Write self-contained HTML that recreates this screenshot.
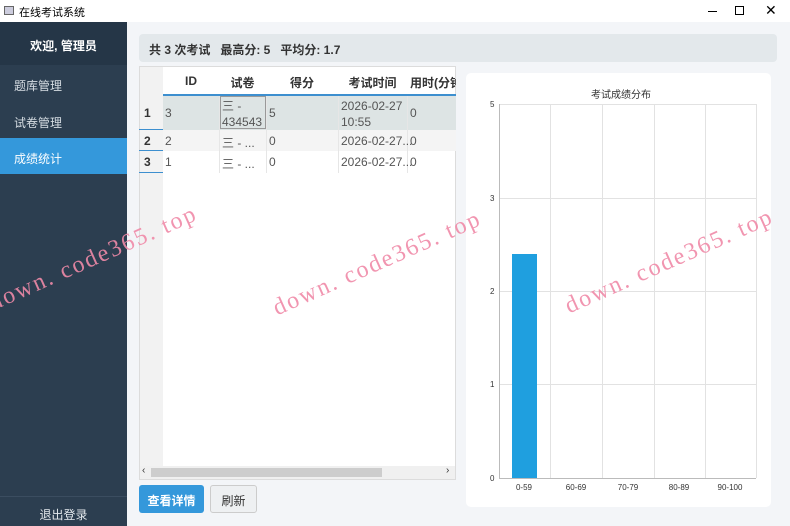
<!DOCTYPE html>
<html><head><meta charset="utf-8"><style>
*{margin:0;padding:0;box-sizing:border-box}
body{width:790px;height:526px;overflow:hidden;position:relative;background:#f3f5f8;font-family:"Liberation Sans","Noto Sans CJK SC",sans-serif;color:#333}
.a{position:absolute}
.t{font-size:12px;white-space:nowrap}
.wm{position:absolute;color:#f08aa8;font-family:"Liberation Serif","DejaVu Serif",serif;font-size:24px;letter-spacing:2px;transform:rotate(-24deg);transform-origin:left bottom;white-space:nowrap;opacity:.9}
</style></head><body>
<!-- title bar -->
<div class="a" style="left:0;top:0;width:790px;height:22px;background:#fff"></div>
<div class="a" style="left:4px;top:6px;width:10px;height:9px;border:1px solid #666;background:#ccd"></div>
<div class="a t" style="left:19px;top:4px;font-size:11px;color:#000">在线考试系统</div>
<div class="a" style="left:708px;top:11px;width:9px;height:1px;background:#000"></div>
<div class="a" style="left:735px;top:6px;width:9px;height:9px;border:1px solid #000"></div>
<div class="a t" style="left:765px;top:2px;font-size:14px;color:#000">✕</div>
<!-- sidebar -->
<div class="a" style="left:0;top:22px;width:127px;height:504px;background:#2c3e50"></div>
<div class="a" style="left:0;top:22px;width:127px;height:43px;background:#253647"></div>
<div class="a t" style="left:0;top:37px;width:127px;text-align:center;color:#fff;font-weight:bold">欢迎, 管理员</div>
<div class="a t" style="left:14px;top:77px;color:#d6dde3">题库管理</div>
<div class="a t" style="left:14px;top:114px;color:#d6dde3">试卷管理</div>
<div class="a" style="left:0;top:138px;width:127px;height:36px;background:#3498db"></div>
<div class="a t" style="left:14px;top:150px;color:#fff">成绩统计</div>
<div class="a" style="left:0;top:496px;width:127px;height:1px;background:#3b4d60"></div>
<div class="a t" style="left:0;top:506px;width:127px;text-align:center;color:#e3e8ec">退出登录</div>
<!-- stats -->
<div class="a" style="left:139px;top:34px;width:638px;height:28px;background:#e3e8eb;border-radius:4px"></div>
<div class="a t" style="left:149px;top:41px;font-weight:bold;color:#333">共 3 次考试 &nbsp;&nbsp;最高分: 5 &nbsp;&nbsp;平均分: 1.7</div>
<!-- table -->
<div class="a" style="left:139px;top:66px;width:317px;height:414px;background:#fff;border:1px solid #dcdcdc"></div>
<div class="a" style="left:140px;top:67px;width:23px;height:399px;background:#f2f2f2"></div>
<div class="a" style="left:163px;top:94px;width:293px;height:2px;background:#3d8fcf"></div>
<div class="a t" style="left:163px;top:74px;width:56px;text-align:center;font-weight:bold">ID</div>
<div class="a t" style="left:219px;top:74px;width:47px;text-align:center;font-weight:bold">试卷</div>
<div class="a t" style="left:266px;top:74px;width:72px;text-align:center;font-weight:bold">得分</div>
<div class="a t" style="left:338px;top:74px;width:69px;text-align:center;font-weight:bold">考试时间</div>
<div class="a t" style="left:410px;top:74px;font-weight:bold;width:46px;overflow:hidden">用时(分钟)</div>
<div class="a" style="left:163px;top:96px;width:293px;height:34px;background:#dde4e4"></div>
<div class="a" style="left:163px;top:130px;width:293px;height:21px;background:#f4f4f4"></div>
<div class="a" style="left:220px;top:96px;width:46px;height:33px;border:1px solid #999"></div>
<div class="a" style="left:139px;top:129px;width:24px;height:1px;background:#3d8fcf"></div>
<div class="a" style="left:139px;top:150px;width:24px;height:1px;background:#3d8fcf"></div>
<div class="a" style="left:139px;top:172px;width:24px;height:1px;background:#3d8fcf"></div>
<div class="a" style="left:219px;top:96px;width:1px;height:77px;background:#e6e6e6"></div>
<div class="a" style="left:266px;top:96px;width:1px;height:77px;background:#e6e6e6"></div>
<div class="a" style="left:338px;top:96px;width:1px;height:77px;background:#e6e6e6"></div>
<div class="a" style="left:407px;top:96px;width:1px;height:77px;background:#e6e6e6"></div>
<div class="a t" style="left:144px;top:106px;font-weight:bold">1</div>
<div class="a t" style="left:144px;top:134px;font-weight:bold">2</div>
<div class="a t" style="left:144px;top:155px;font-weight:bold">3</div>
<div class="a t" style="left:165px;top:106px;color:#555">3</div>
<div class="a t" style="left:222px;top:98px;line-height:16px;color:#555">三 -<br>434543</div>
<div class="a t" style="left:269px;top:106px;color:#555">5</div>
<div class="a t" style="left:341px;top:98px;line-height:16px;color:#555">2026-02-27<br>10:55</div>
<div class="a t" style="left:410px;top:106px;color:#555">0</div>
<div class="a t" style="left:165px;top:134px;color:#555">2</div>
<div class="a t" style="left:222px;top:134px;color:#555">三 - ...</div>
<div class="a t" style="left:269px;top:134px;color:#555">0</div>
<div class="a t" style="left:341px;top:134px;color:#555">2026-02-27...</div>
<div class="a t" style="left:410px;top:134px;color:#555">0</div>
<div class="a t" style="left:165px;top:155px;color:#555">1</div>
<div class="a t" style="left:222px;top:155px;color:#555">三 - ...</div>
<div class="a t" style="left:269px;top:155px;color:#555">0</div>
<div class="a t" style="left:341px;top:155px;color:#555">2026-02-27...</div>
<div class="a t" style="left:410px;top:155px;color:#555">0</div>
<div class="a" style="left:140px;top:466px;width:315px;height:13px;background:#f0f0f0"></div>
<div class="a" style="left:151px;top:468px;width:231px;height:9px;background:#cdcdcd"></div>
<div class="a t" style="left:142px;top:465px;font-size:10px">‹</div>
<div class="a t" style="left:446px;top:465px;font-size:10px">›</div>
<!-- buttons -->
<div class="a" style="left:139px;top:485px;width:65px;height:28px;background:#3498db;border-radius:3px"></div>
<div class="a t" style="left:139px;top:492px;width:65px;text-align:center;color:#fff;font-weight:bold">查看详情</div>
<div class="a" style="left:210px;top:485px;width:47px;height:28px;background:#eef0f2;border:1px solid #ccc;border-radius:3px"></div>
<div class="a t" style="left:210px;top:492px;width:47px;text-align:center;color:#333">刷新</div>
<!-- chart -->
<div class="a" style="left:466px;top:73px;width:305px;height:434px;background:#fff;border-radius:5px"></div>
<div class="a t" style="left:466px;top:86px;width:310px;text-align:center;font-size:10px;color:#333">考试成绩分布</div>
<svg class="a" style="left:466px;top:73px" width="305" height="434">
<g stroke="#e2e2e2" stroke-width="1">
<line x1="33" y1="31.5" x2="290" y2="31.5"/><line x1="33" y1="125.5" x2="290" y2="125.5"/>
<line x1="33" y1="218.5" x2="290" y2="218.5"/><line x1="33" y1="311.5" x2="290" y2="311.5"/>
<line x1="84.5" y1="31" x2="84.5" y2="405"/><line x1="136.5" y1="31" x2="136.5" y2="405"/>
<line x1="188.5" y1="31" x2="188.5" y2="405"/><line x1="239.5" y1="31" x2="239.5" y2="405"/>
<line x1="290.5" y1="31" x2="290.5" y2="405"/>
</g>
<line x1="33.5" y1="31" x2="33.5" y2="405" stroke="#bbb"/>
<line x1="33" y1="405.5" x2="290" y2="405.5" stroke="#bbb"/>
<rect x="46" y="181" width="25" height="224" fill="#1f9fdf"/>
<g font-size="8" fill="#333" font-family="Liberation Sans,sans-serif">
<text x="24" y="34">5</text><text x="24" y="128">3</text><text x="24" y="221">2</text><text x="24" y="314">1</text><text x="24" y="408">0</text>
<g text-anchor="middle"><text x="58" y="417">0-59</text><text x="110" y="417">60-69</text><text x="162" y="417">70-79</text><text x="213" y="417">80-89</text><text x="264" y="417">90-100</text></g>
</g>
</svg>
<!-- watermarks -->
<div class="wm" style="left:-4px;top:290px">down. code365. top</div>
<div class="wm" style="left:280px;top:295px">down. code365. top</div>
<div class="wm" style="left:572px;top:293px">down. code365. top</div>
</body></html>
